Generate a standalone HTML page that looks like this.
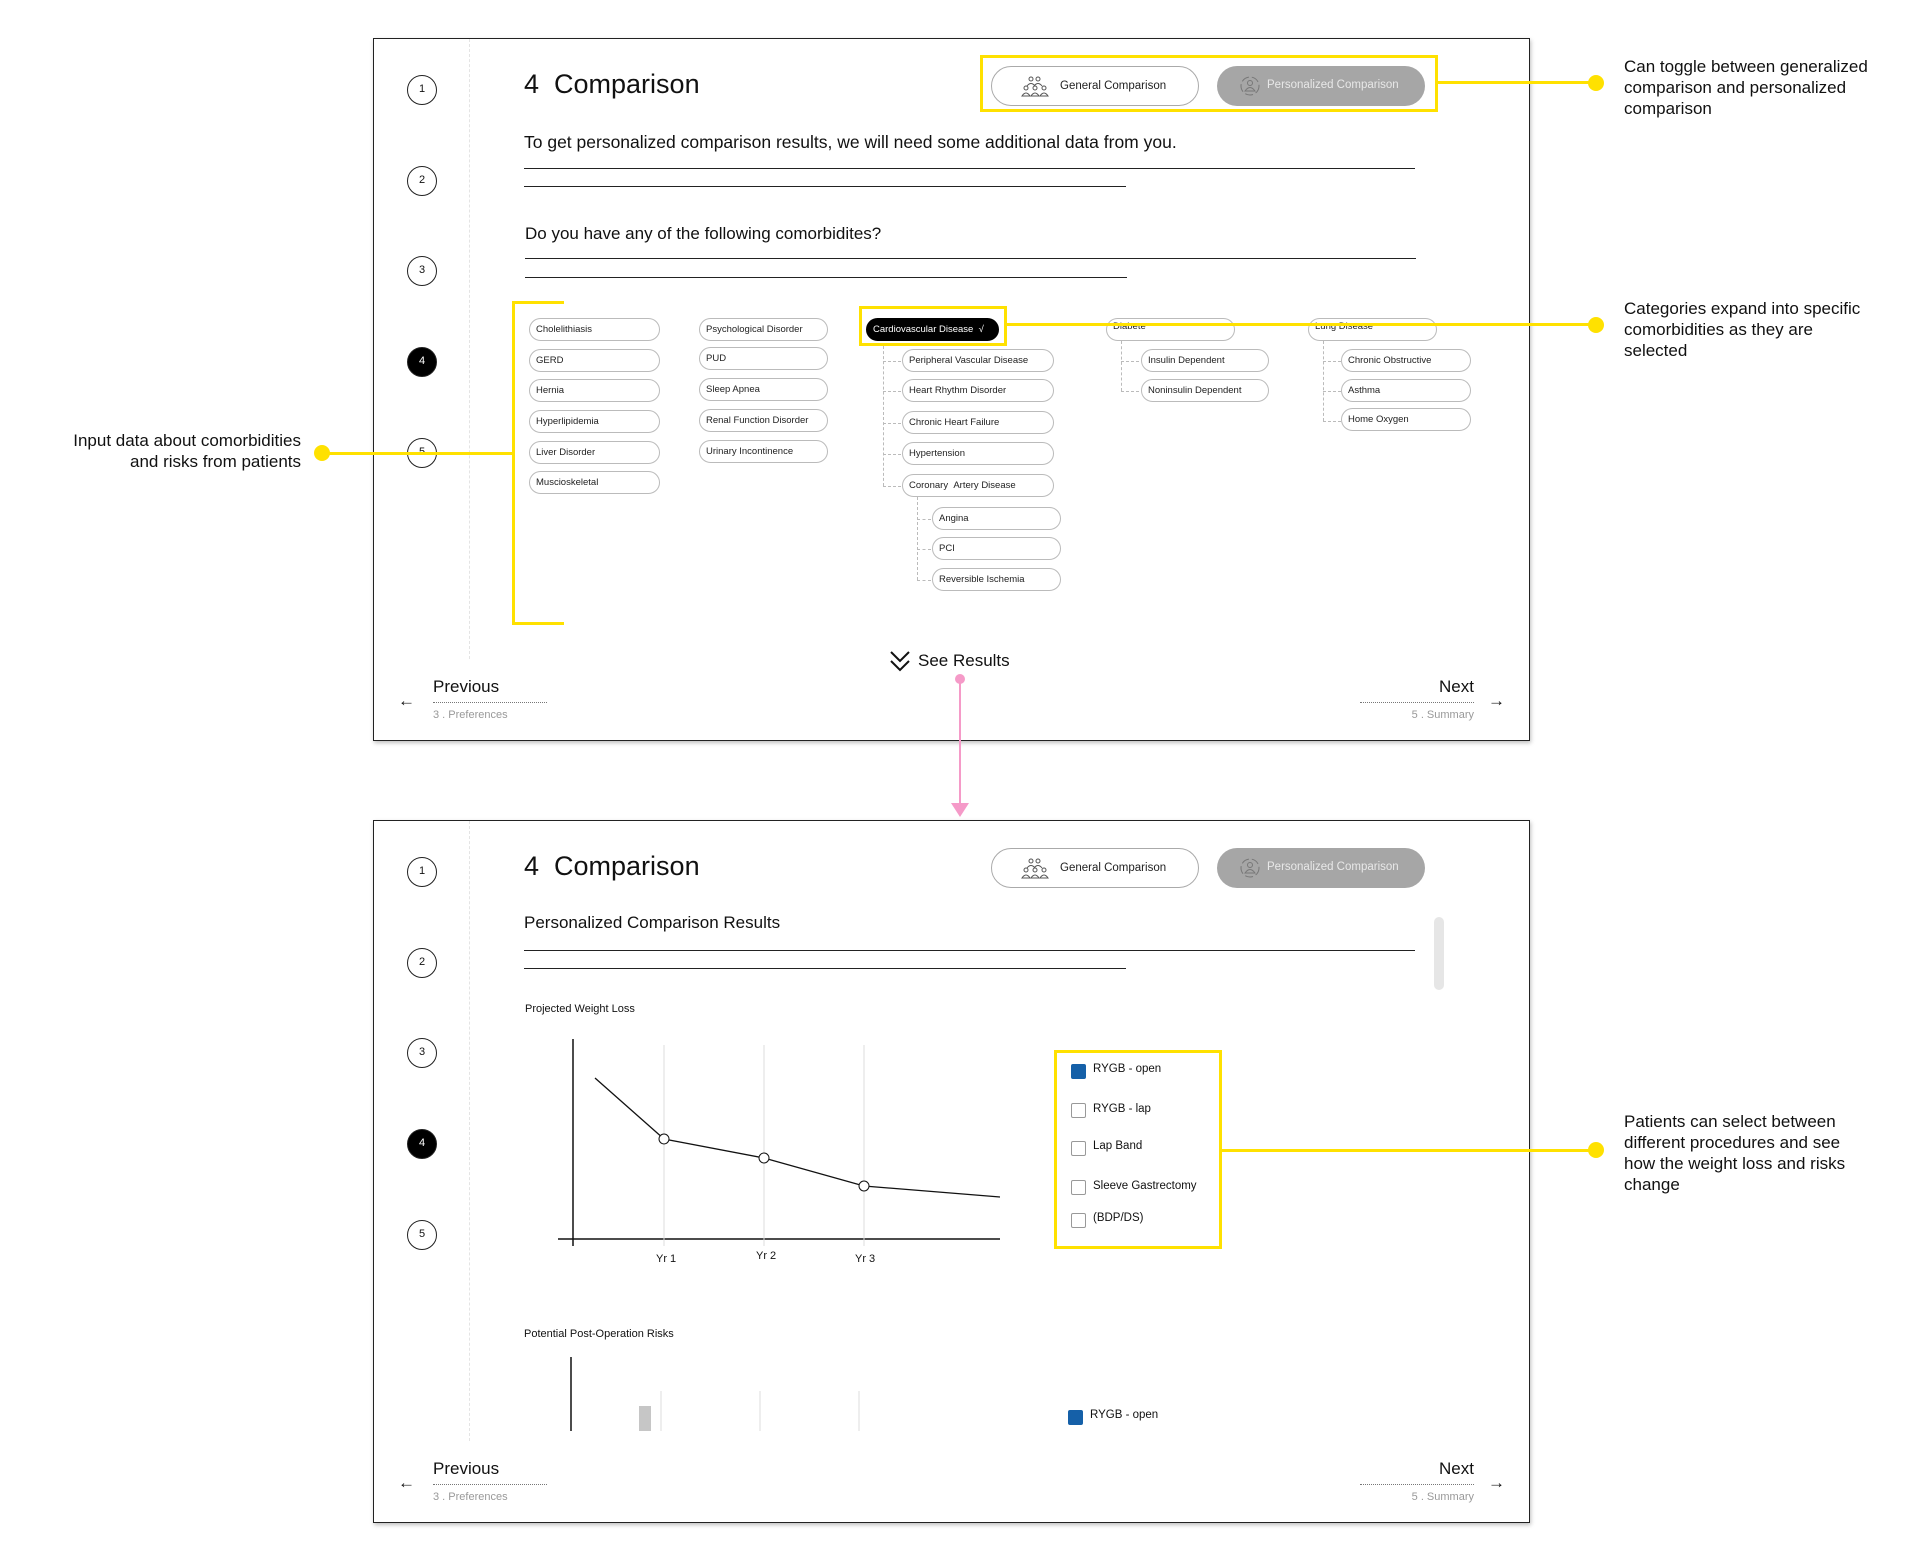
<!DOCTYPE html>
<html><head><meta charset="utf-8">
<style>
*{margin:0;padding:0;box-sizing:border-box}
body{width:1910px;height:1553px;background:#fff;position:relative;overflow:hidden;font-family:"Liberation Sans",sans-serif;color:#111}
.a{position:absolute}
.frame{position:absolute;left:373px;width:1157px;height:703px;border:1px solid #222;background:#fff;box-shadow:1px 2px 4px rgba(0,0,0,.25);z-index:1}
.sd{position:absolute;left:95px;top:0;width:0;border-left:1px dashed #e4e4e4}
.st{position:absolute;left:33px;width:30px;height:30px;border:1.5px solid #222;border-radius:50%;font-size:11px;text-align:center;line-height:27px}
.st.on{background:#000;color:#fff}
.ttl{position:absolute;left:150px;top:30px;font-size:27px;font-weight:normal}
.btn{position:absolute;top:27px;height:40px;width:208px;border-radius:20px;font-size:11.5px;line-height:38px;padding-left:68px}
.g{left:617px;border:1.5px solid #aaa;color:#222}
.pz{left:843px;background:#a6a6a6;color:#e8e8e8;width:208px;padding-left:50px}
.ln{position:absolute;height:0;border-top:1.5px solid #222}
.p{position:absolute;height:23px;border:1.3px solid #bbb;border-radius:12px;font-size:9.5px;line-height:21px;padding-left:6px;color:#222;white-space:nowrap}
.dv{position:absolute;border-left:1px dashed #bbb;width:0}
.dh{position:absolute;border-top:1px dashed #bbb;height:0}
.y{position:absolute;background:#ffe100;z-index:5}
.yb{position:absolute;border:3px solid #ffe100}
.dot{position:absolute;width:16px;height:16px;border-radius:50%;background:#ffe100;z-index:5}
.note{position:absolute;font-size:17px;line-height:21px;color:#111}
.nav{position:absolute;font-size:17px}
.sub{position:absolute;font-size:11px;color:#999}
.dot2{position:absolute;border-top:1px dotted #777;width:114px;height:0}
.cb{position:absolute;width:15px;height:15px;border:1.3px solid #999;border-radius:2px}
.cb.f{background:#1560a8;border-color:#1560a8}
.lg{position:absolute;font-size:11.5px}
</style></head><body>

<!-- annotations -->
<div class="y" style="left:1436px;top:81px;width:159px;height:3px"></div>
<div class="dot" style="left:1588px;top:75px"></div>
<div class="note" style="left:1624px;top:56px">Can toggle between generalized<br>comparison and personalized<br>comparison</div>

<div class="y" style="left:1006px;top:323px;width:589px;height:3px"></div>
<div class="dot" style="left:1588px;top:317px"></div>
<div class="note" style="left:1624px;top:298px">Categories expand into specific<br>comorbidities as they are<br>selected</div>

<div class="y" style="left:322px;top:452px;width:190px;height:3px"></div>
<div class="dot" style="left:314px;top:445px"></div>
<div class="note" style="left:0;width:301px;text-align:right;top:430px">Input data about comorbidities<br>and risks from patients</div>

<div class="y" style="left:1219px;top:1149px;width:376px;height:3px"></div>
<div class="dot" style="left:1588px;top:1142px"></div>
<div class="note" style="left:1624px;top:1111px">Patients can select between<br>different procedures and see<br>how the weight loss and risks<br>change</div>

<!-- pink arrow -->
<div class="a" style="left:955px;top:674px;width:10px;height:10px;border-radius:50%;background:#f59ac8;z-index:5"></div>
<div class="a" style="left:959px;top:680px;width:2px;height:125px;background:#f59ac8;z-index:5"></div>
<div class="a" style="left:951px;top:803px;width:0;height:0;border-left:9px solid transparent;border-right:9px solid transparent;border-top:14px solid #f59ac8;z-index:5"></div>

<!-- FRAME 1 -->
<div class="frame" style="top:38px">
 <div class="sd" style="height:620px"></div>
 <div class="st" style="top:36px">1</div>
 <div class="st" style="top:127px">2</div>
 <div class="st" style="top:217px">3</div>
 <div class="st on" style="top:308px">4</div>
 <div class="st" style="top:399px">5</div>
 <div class="ttl">4&nbsp;&nbsp;Comparison</div>
 <div class="btn g"><svg class="a" style="left:28px;top:9px" width="30" height="22" viewBox="0 0 30 22" fill="none" stroke="#555" stroke-width="1"><circle cx="11" cy="3" r="2"/><circle cx="18" cy="3" r="2"/><path d="M7 10q4-5 8 0M14 10q4-5 8 0"/><circle cx="6" cy="12" r="2"/><circle cx="15" cy="12" r="2"/><circle cx="24" cy="12" r="2"/><path d="M2 20q4-6 8 0zM11 20q4-6 8 0zM20 20q4-6 8 0z"/></svg>General Comparison</div>
 <div class="btn pz"><svg class="a" style="left:22px;top:9px" width="22" height="22" viewBox="0 0 22 22" fill="none" stroke="#777" stroke-width="1"><circle cx="11" cy="11" r="9" stroke-dasharray="8 3"/><circle cx="11" cy="8" r="2.5"/><path d="M6 16q5-7 10 0z"/></svg>Personalized Comparison</div>
 <div class="yb" style="left:606px;top:16px;width:458px;height:57px"></div>

 <div class="a" style="left:150px;top:93px;font-size:17.5px">To get personalized comparison results, we will need some additional data from you.</div>
 <div class="ln" style="left:150px;top:129px;width:891px"></div>
 <div class="ln" style="left:150px;top:147px;width:602px"></div>
 <div class="a" style="left:151px;top:185px;font-size:17px">Do you have any of the following comorbidites?</div>
 <div class="ln" style="left:151px;top:219px;width:891px"></div>
 <div class="ln" style="left:151px;top:238px;width:602px"></div>

 <div class="y" style="left:138px;top:262px;width:3px;height:324px"></div>
 <div class="y" style="left:138px;top:262px;width:52px;height:3px"></div>
 <div class="y" style="left:138px;top:583px;width:52px;height:3px"></div>

 <div class="p" style="left:155px;top:279px;width:131px">Cholelithiasis</div>
 <div class="p" style="left:155px;top:310px;width:131px">GERD</div>
 <div class="p" style="left:155px;top:340px;width:131px">Hernia</div>
 <div class="p" style="left:155px;top:371px;width:131px">Hyperlipidemia</div>
 <div class="p" style="left:155px;top:402px;width:131px">Liver Disorder</div>
 <div class="p" style="left:155px;top:432px;width:131px">Muscioskeletal</div>
 <div class="p" style="left:325px;top:279px;width:129px">Psychological Disorder</div>
 <div class="p" style="left:325px;top:308px;width:129px">PUD</div>
 <div class="p" style="left:325px;top:339px;width:129px">Sleep Apnea</div>
 <div class="p" style="left:325px;top:370px;width:129px">Renal Function Disorder</div>
 <div class="p" style="left:325px;top:401px;width:129px">Urinary Incontinence</div>
 <div class="p" style="left:492px;top:279px;width:133px;background:#000;color:#fff;border-color:#000">Cardiovascular Disease &nbsp;√</div>
 <div class="yb" style="left:485px;top:267px;width:148px;height:40px"></div>
 <div class="dv" style="left:509px;top:307px;height:140px"></div>
 <div class="dh" style="left:509px;top:322px;width:18px"></div>
 <div class="dh" style="left:509px;top:352px;width:18px"></div>
 <div class="dh" style="left:509px;top:384px;width:18px"></div>
 <div class="dh" style="left:509px;top:415px;width:18px"></div>
 <div class="dh" style="left:509px;top:447px;width:18px"></div>
 <div class="p" style="left:528px;top:310px;width:152px">Peripheral Vascular Disease</div>
 <div class="p" style="left:528px;top:340px;width:152px">Heart Rhythm Disorder</div>
 <div class="p" style="left:528px;top:372px;width:152px">Chronic Heart Failure</div>
 <div class="p" style="left:528px;top:403px;width:152px">Hypertension</div>
 <div class="p" style="left:528px;top:435px;width:152px">Coronary &nbsp;Artery Disease</div>
 <div class="dv" style="left:543px;top:458px;height:83px"></div>
 <div class="dh" style="left:543px;top:480px;width:14px"></div>
 <div class="dh" style="left:543px;top:510px;width:14px"></div>
 <div class="dh" style="left:543px;top:541px;width:14px"></div>
 <div class="p" style="left:558px;top:468px;width:129px">Angina</div>
 <div class="p" style="left:558px;top:498px;width:129px">PCI</div>
 <div class="p" style="left:558px;top:529px;width:129px">Reversible Ischemia</div>
 <div class="p" style="left:732px;top:279px;width:129px;line-height:16px">Diabete</div>
 <div class="dv" style="left:747px;top:302px;height:50px"></div>
 <div class="dh" style="left:747px;top:322px;width:18px"></div>
 <div class="dh" style="left:747px;top:352px;width:18px"></div>
 <div class="p" style="left:767px;top:310px;width:128px">Insulin Dependent</div>
 <div class="p" style="left:767px;top:340px;width:128px">Noninsulin Dependent</div>
 <div class="p" style="left:934px;top:279px;width:129px;line-height:16px">Lung Disease</div>
 <div class="dv" style="left:949px;top:302px;height:80px"></div>
 <div class="dh" style="left:949px;top:322px;width:18px"></div>
 <div class="dh" style="left:949px;top:352px;width:18px"></div>
 <div class="dh" style="left:949px;top:382px;width:18px"></div>
 <div class="p" style="left:967px;top:310px;width:130px">Chronic Obstructive</div>
 <div class="p" style="left:967px;top:340px;width:130px">Asthma</div>
 <div class="p" style="left:967px;top:369px;width:130px">Home Oxygen</div>

 <svg class="a" style="left:515px;top:611px" width="22" height="24" viewBox="0 0 22 24" fill="none" stroke="#111" stroke-width="2"><path d="M2 2l9 9 9-9M2 11l9 9 9-9"/></svg>
 <div class="a" style="left:544px;top:612px;font-size:17px">See Results</div>

 <div class="a" style="left:24px;top:652px;font-size:17px">←</div>
 <div class="nav" style="left:59px;top:638px">Previous</div>
 <div class="dot2" style="left:59px;top:663px"></div>
 <div class="sub" style="left:59px;top:670px">3 . Preferences</div>
 <div class="nav" style="right:55px;top:638px">Next</div>
 <div class="dot2" style="right:55px;top:663px"></div>
 <div class="sub" style="right:55px;top:670px">5 . Summary</div>
 <div class="a" style="left:1114px;top:652px;font-size:17px">→</div>
</div>

<!-- FRAME 2 -->
<div class="frame" style="top:820px">
 <div class="sd" style="height:620px"></div>
 <div class="st" style="top:36px">1</div>
 <div class="st" style="top:127px">2</div>
 <div class="st" style="top:217px">3</div>
 <div class="st on" style="top:308px">4</div>
 <div class="st" style="top:399px">5</div>
 <div class="ttl">4&nbsp;&nbsp;Comparison</div>
 <div class="btn g"><svg class="a" style="left:28px;top:9px" width="30" height="22" viewBox="0 0 30 22" fill="none" stroke="#555" stroke-width="1"><circle cx="11" cy="3" r="2"/><circle cx="18" cy="3" r="2"/><path d="M7 10q4-5 8 0M14 10q4-5 8 0"/><circle cx="6" cy="12" r="2"/><circle cx="15" cy="12" r="2"/><circle cx="24" cy="12" r="2"/><path d="M2 20q4-6 8 0zM11 20q4-6 8 0zM20 20q4-6 8 0z"/></svg>General Comparison</div>
 <div class="btn pz"><svg class="a" style="left:22px;top:9px" width="22" height="22" viewBox="0 0 22 22" fill="none" stroke="#777" stroke-width="1"><circle cx="11" cy="11" r="9" stroke-dasharray="8 3"/><circle cx="11" cy="8" r="2.5"/><path d="M6 16q5-7 10 0z"/></svg>Personalized Comparison</div>

 <div class="a" style="left:150px;top:92px;font-size:17px">Personalized Comparison Results</div>
 <div class="ln" style="left:150px;top:129px;width:891px"></div>
 <div class="ln" style="left:150px;top:147px;width:602px"></div>
 <div class="a" style="left:1060px;top:96px;width:10px;height:73px;border-radius:5px;background:#e6e6e6"></div>

 <div class="a" style="left:151px;top:182px;font-size:11px">Projected Weight Loss</div>
 <svg class="a" style="left:0;top:0" width="1157" height="703" fill="none">
  <line x1="199" y1="218" x2="199" y2="425" stroke="#111" stroke-width="1.5"/>
  <line x1="184" y1="418" x2="626" y2="418" stroke="#111" stroke-width="1.5"/>
  <g stroke="#ddd"><line x1="290" y1="224" x2="290" y2="425"/><line x1="390" y1="224" x2="390" y2="425"/><line x1="490" y1="224" x2="490" y2="425"/></g>
  <polyline points="221,257 290,318 390,337 490,365 626,376" stroke="#111" stroke-width="1.3"/>
  <g fill="#fff" stroke="#111"><circle cx="290" cy="318" r="5"/><circle cx="390" cy="337" r="5"/><circle cx="490" cy="365" r="5"/></g>
  <line x1="197" y1="536" x2="197" y2="610" stroke="#111" stroke-width="1.5"/>
  <g stroke="#ddd"><line x1="287" y1="570" x2="287" y2="610"/><line x1="386" y1="570" x2="386" y2="610"/><line x1="485" y1="570" x2="485" y2="610"/></g>
  <rect x="265" y="585" width="12" height="25" fill="#c6c6c6"/>
 </svg>
 <div class="a" style="left:282px;top:432px;font-size:11px">Yr 1</div>
 <div class="a" style="left:382px;top:429px;font-size:11px">Yr 2</div>
 <div class="a" style="left:481px;top:432px;font-size:11px">Yr 3</div>

 <div class="yb" style="left:680px;top:229px;width:168px;height:199px"></div>
 <div class="cb f" style="left:697px;top:243px"></div><div class="lg" style="left:719px;top:242px">RYGB - open</div>
 <div class="cb" style="left:697px;top:282px"></div><div class="lg" style="left:719px;top:282px">RYGB - lap</div>
 <div class="cb" style="left:697px;top:320px"></div><div class="lg" style="left:719px;top:319px">Lap Band</div>
 <div class="cb" style="left:697px;top:359px"></div><div class="lg" style="left:719px;top:359px">Sleeve Gastrectomy</div>
 <div class="cb" style="left:697px;top:392px"></div><div class="lg" style="left:719px;top:391px">(BDP/DS)</div>

 <div class="a" style="left:150px;top:507px;font-size:11px">Potential Post-Operation Risks</div>
 <div class="cb f" style="left:694px;top:589px"></div><div class="lg" style="left:716px;top:588px">RYGB - open</div>

 <div class="a" style="left:24px;top:652px;font-size:17px">←</div>
 <div class="nav" style="left:59px;top:638px">Previous</div>
 <div class="dot2" style="left:59px;top:663px"></div>
 <div class="sub" style="left:59px;top:670px">3 . Preferences</div>
 <div class="nav" style="right:55px;top:638px">Next</div>
 <div class="dot2" style="right:55px;top:663px"></div>
 <div class="sub" style="right:55px;top:670px">5 . Summary</div>
 <div class="a" style="left:1114px;top:652px;font-size:17px">→</div>
</div>
</body></html>
